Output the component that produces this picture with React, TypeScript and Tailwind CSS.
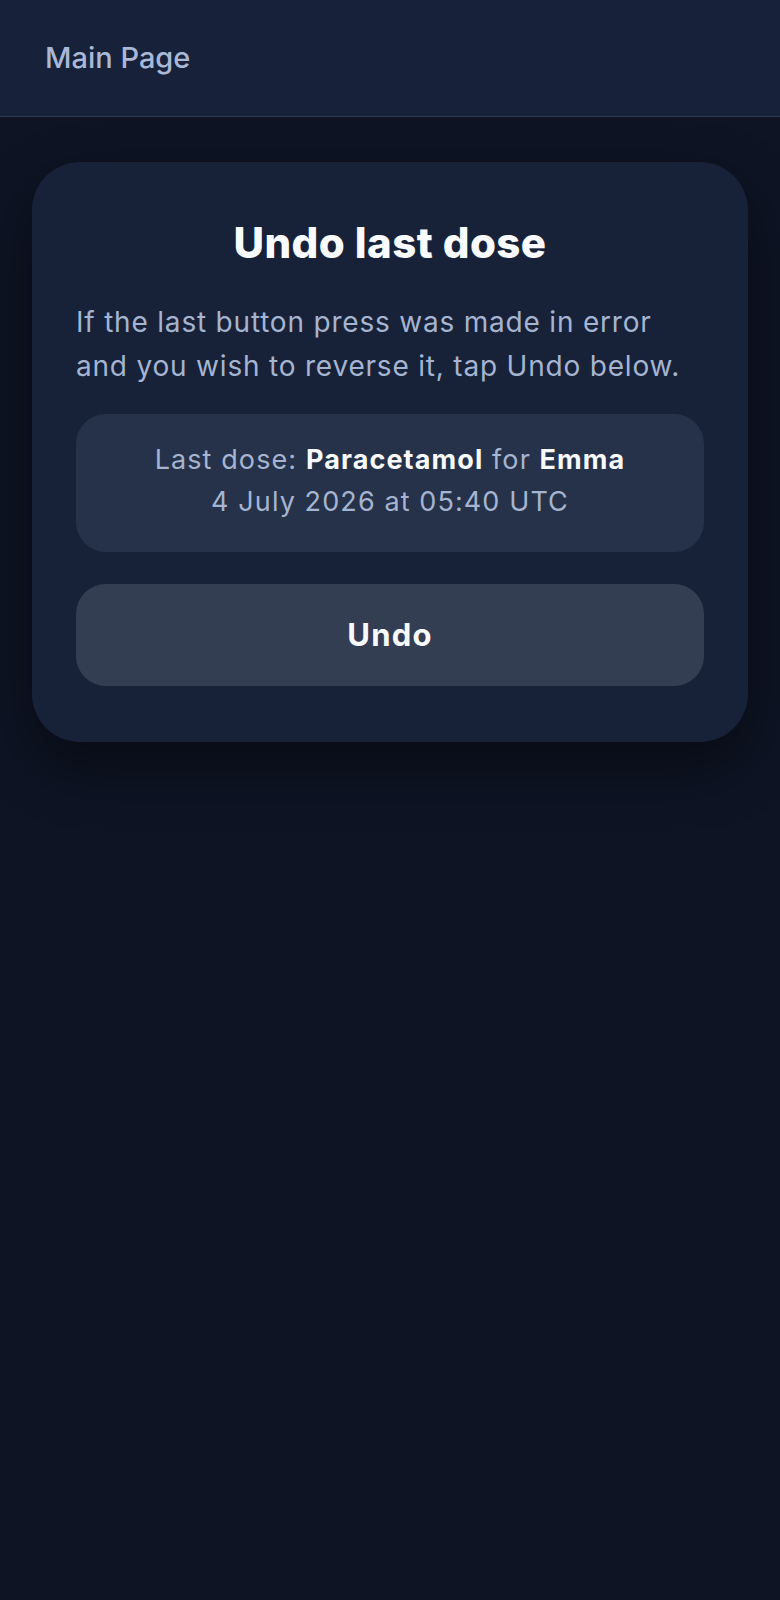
export default function App() {
  return (
    <div
      className="min-h-[1600px] bg-[#0e1424] text-white"
      style={{ fontFamily: "Inter, 'Noto Sans', sans-serif" }}
    >
      <header className="h-[117px] flex items-center px-[45px] bg-[#17223a] border-b border-[#2e3a52]">
        <span className="text-[29px] font-medium text-[#a9b8d6]">Main Page</span>
      </header>

      <main className="px-[32px] pt-[45px]">
        <section className="rounded-[48px] bg-[#172239] px-[44px] pt-[55px] pb-[56px] shadow-[0_24px_60px_rgba(0,0,0,0.45)]">
          <h1 className="text-center text-[42px] leading-[52px] font-extrabold tracking-[0.4px] text-[#f8fafc]">
            Undo last dose
          </h1>
          <p className="mt-[31px] text-[28px] leading-[44px] tracking-[0.8px] text-[#a5b4d0]">
            If the last button press was made in error and you wish to reverse it, tap Undo below.
          </p>

          <div className="mt-[26px] rounded-[30px] bg-[#263249] pt-[25px] pb-[29px] text-center text-[27px] leading-[42px] tracking-[1.1px] text-[#a5b4d0]">
            <div>
              Last dose: <strong className="font-bold text-[#f8fafc]">Paracetamol</strong> for{" "}
              <strong className="font-bold text-[#f8fafc]">Emma</strong>
            </div>
            <div>4 July 2026 at 05:40 UTC</div>
          </div>

          <button className="mt-[32px] w-full h-[102px] rounded-[30px] bg-[#333e53] text-[31px] font-bold tracking-[1.2px] text-[#f8fafc]">
            Undo
          </button>
        </section>
      </main>
    </div>
  );
}
